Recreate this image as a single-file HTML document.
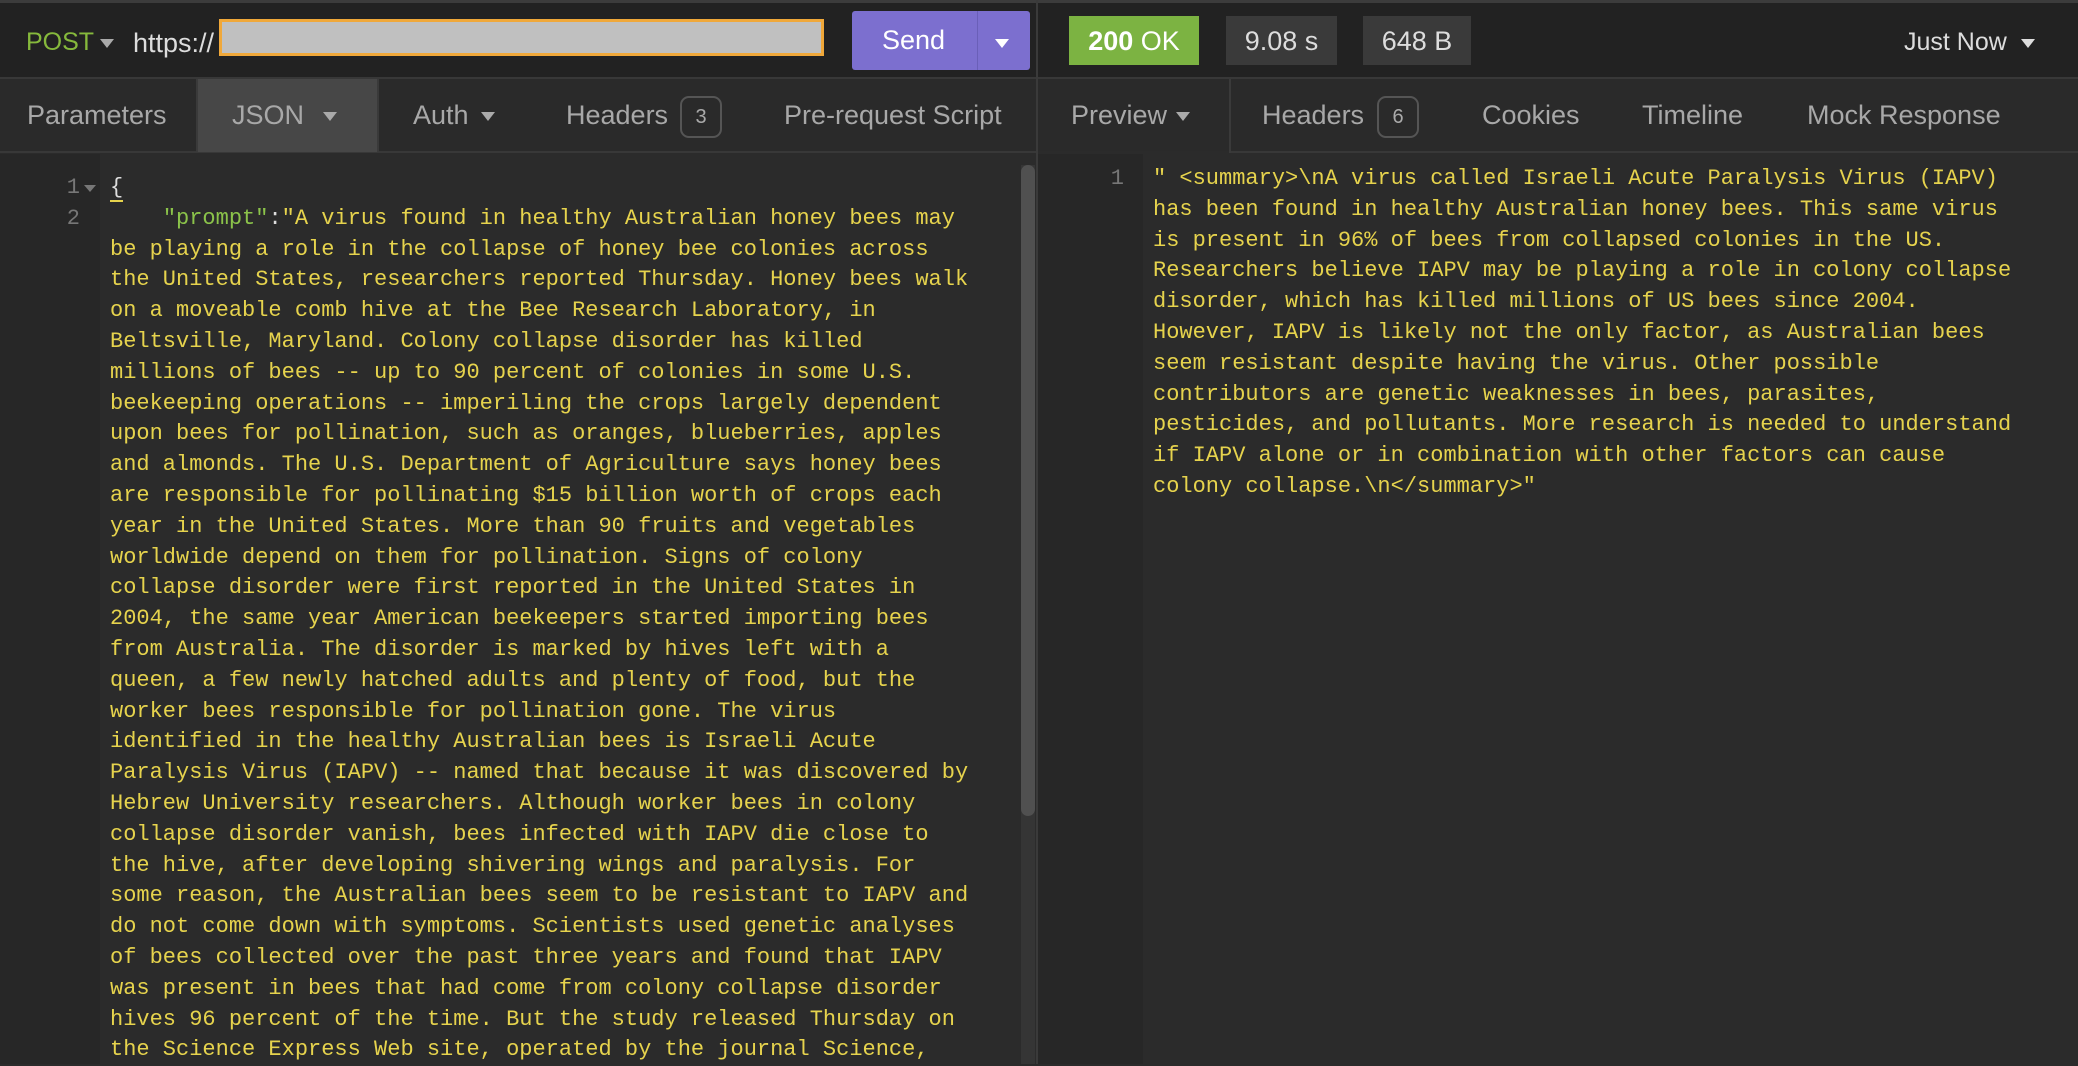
<!DOCTYPE html>
<html><head><meta charset="utf-8"><style>
*{margin:0;padding:0;box-sizing:border-box}
body{width:2078px;height:1064px;background:#2b2b2b;position:relative;overflow:hidden;font-family:"Liberation Sans",sans-serif}
.a{position:absolute}
.top{left:0;top:0;width:2078px;height:79px;background:#222;border-top:3px solid #3c3c3c;border-bottom:2px solid #383838}
.tabs{left:0;top:79px;width:2078px;height:74px;background:#2a2a2a;border-bottom:2px solid #383838}
.t{position:absolute;top:99px;font-size:27px;color:#a8a8a8;line-height:32px}
.tri{display:inline-block;width:0;height:0;border-left:7px solid transparent;border-right:7px solid transparent;border-top:9px solid #aaa;vertical-align:middle}
.badge{position:absolute;border:2px solid #555;border-radius:9px;color:#aaa;font-size:20px;text-align:center;line-height:38px;height:42px;width:42px;top:96px}
.code{font-family:"Liberation Mono",monospace;font-size:22px;line-height:30.8px;color:#e6d34d;white-space:pre}
.ln{font-family:"Liberation Mono",monospace;font-size:22px;line-height:30.8px;color:#777;text-align:right}
.box{position:absolute;top:16px;height:49px;background:#3a3a3a;color:#ddd;font-size:27px;line-height:51px;text-align:center}
</style></head><body>
<div class="a top"></div>
<div class="a tabs"></div>
<div class="a" style="left:1036px;top:0;width:2px;height:1064px;background:#3a3a3a"></div>
<!-- left top -->
<div class="a" style="left:26px;top:28px;font-size:25px;color:#86b93c">POST</div>
<div class="a tri" style="left:100px;top:39px"></div>
<div class="a" style="left:133px;top:28px;font-size:27px;color:#ddd">https://</div>
<div class="a" style="left:219px;top:19px;width:605px;height:37px;background:#c0c0c0;border:3px solid #f0a83a"></div>
<div class="a" style="left:852px;top:11px;width:178px;height:59px;background:#7c6fcf;border-radius:3px"></div>
<div class="a" style="left:977px;top:11px;width:1px;height:59px;background:#6a5fb8"></div>
<div class="a" style="left:882px;top:25px;font-size:27px;color:#fff">Send</div>
<div class="a tri" style="left:995px;top:39px;border-top-color:#fff"></div>
<!-- left tabs -->
<div class="a" style="left:196px;top:79px;width:183px;height:73px;background:#474747;border-left:2px solid #3a3a3a;border-right:2px solid #3a3a3a"></div>
<div class="t" style="left:27px">Parameters</div>
<div class="t" style="left:232px">JSON</div><div class="a tri" style="left:323px;top:112px"></div>
<div class="t" style="left:413px">Auth</div><div class="a tri" style="left:481px;top:112px"></div>
<div class="t" style="left:566px">Headers</div><div class="badge" style="left:680px">3</div>
<div class="t" style="left:784px">Pre-request Script</div>
<!-- left editor -->
<div class="a" style="left:0;top:154px;width:100px;height:910px;background:#272727"></div>
<div class="a" style="left:1021px;top:165px;width:14px;height:899px;background:#353535"></div>
<div class="a" style="left:1021px;top:165px;width:14px;height:651px;background:#505050;border-radius:7px"></div>
<div class="a ln" style="left:40px;top:173px;width:40px">1<br>2</div>
<div class="a" style="left:84px;top:185px;width:0;height:0;border-left:6px solid transparent;border-right:6px solid transparent;border-top:7px solid #777"></div>
<div class="a code" style="left:110px;top:173px"><span style="color:#ddd;border-bottom:2px solid #e6d34d">{</span>
    <span style="color:#8bc34a">"prompt"</span><span style="color:#ddd">:</span>"A virus found in healthy Australian honey bees may
be playing a role in the collapse of honey bee colonies across
the United States, researchers reported Thursday. Honey bees walk
on a moveable comb hive at the Bee Research Laboratory, in
Beltsville, Maryland. Colony collapse disorder has killed
millions of bees -- up to 90 percent of colonies in some U.S.
beekeeping operations -- imperiling the crops largely dependent
upon bees for pollination, such as oranges, blueberries, apples
and almonds. The U.S. Department of Agriculture says honey bees
are responsible for pollinating $15 billion worth of crops each
year in the United States. More than 90 fruits and vegetables
worldwide depend on them for pollination. Signs of colony
collapse disorder were first reported in the United States in
2004, the same year American beekeepers started importing bees
from Australia. The disorder is marked by hives left with a
queen, a few newly hatched adults and plenty of food, but the
worker bees responsible for pollination gone. The virus
identified in the healthy Australian bees is Israeli Acute
Paralysis Virus (IAPV) -- named that because it was discovered by
Hebrew University researchers. Although worker bees in colony
collapse disorder vanish, bees infected with IAPV die close to
the hive, after developing shivering wings and paralysis. For
some reason, the Australian bees seem to be resistant to IAPV and
do not come down with symptoms. Scientists used genetic analyses
of bees collected over the past three years and found that IAPV
was present in bees that had come from colony collapse disorder
hives 96 percent of the time. But the study released Thursday on
the Science Express Web site, operated by the journal Science,</div>
<!-- right top -->
<div class="box" style="left:1069px;width:130px;background:#7cb342;color:#fff"><b>200</b> OK</div>
<div class="box" style="left:1226px;width:111px">9.08 s</div>
<div class="box" style="left:1363px;width:108px">648 B</div>
<div class="a" style="left:1904px;top:28px;font-size:25px;color:#ddd">Just Now</div>
<div class="a tri" style="left:2021px;top:39px;border-top-color:#ddd"></div>
<!-- right tabs -->
<div class="a" style="left:1038px;top:151px;width:192px;height:3px;background:#2b2b2b"></div>
<div class="a" style="left:1229px;top:79px;width:2px;height:74px;background:#3a3a3a"></div>
<div class="t" style="left:1071px">Preview</div><div class="a tri" style="left:1176px;top:112px"></div>
<div class="t" style="left:1262px">Headers</div><div class="badge" style="left:1377px">6</div>
<div class="t" style="left:1482px">Cookies</div>
<div class="t" style="left:1642px">Timeline</div>
<div class="t" style="left:1807px">Mock Response</div>
<div class="a" style="left:1038px;top:154px;width:105px;height:910px;background:#272727"></div>
<div class="a ln" style="left:1100px;top:164px;width:24px">1</div>
<div class="a code" style="left:1153px;top:164px">" &lt;summary&gt;\nA virus called Israeli Acute Paralysis Virus (IAPV)
has been found in healthy Australian honey bees. This same virus
is present in 96% of bees from collapsed colonies in the US.
Researchers believe IAPV may be playing a role in colony collapse
disorder, which has killed millions of US bees since 2004.
However, IAPV is likely not the only factor, as Australian bees
seem resistant despite having the virus. Other possible
contributors are genetic weaknesses in bees, parasites,
pesticides, and pollutants. More research is needed to understand
if IAPV alone or in combination with other factors can cause
colony collapse.\n&lt;/summary&gt;"</div>
</body></html>
